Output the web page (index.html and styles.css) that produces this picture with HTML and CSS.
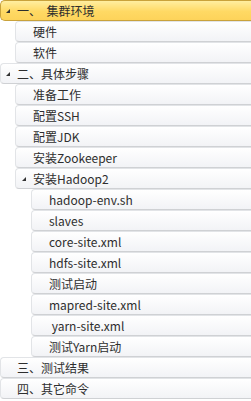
FILE: index.html
```html
<!DOCTYPE html>
<html>
<head>
<meta charset="utf-8">
<link rel="stylesheet" href="styles.css">
</head>
<body>
<ul class="tree">
  <li>
    <div class="row l1 selected"><span class="arrow"></span><span class="label">一、&nbsp; 集群环境</span></div>
    <ul class="sub">
      <li><div class="row l2"><span class="label">硬件</span></div></li>
      <li><div class="row l2"><span class="label">软件</span></div></li>
    </ul>
  </li>
  <li>
    <div class="row l1"><span class="arrow"></span><span class="label">二、具体步骤</span></div>
    <ul class="sub">
      <li><div class="row l2"><span class="label">准备工作</span></div></li>
      <li><div class="row l2"><span class="label">配置SSH</span></div></li>
      <li><div class="row l2"><span class="label">配置JDK</span></div></li>
      <li><div class="row l2"><span class="label">安装Zookeeper</span></div></li>
      <li>
        <div class="row l2"><span class="arrow"></span><span class="label">安装Hadoop2</span></div>
        <ul class="sub">
          <li><div class="row l3"><span class="label">hadoop-env.sh</span></div></li>
          <li><div class="row l3"><span class="label">slaves</span></div></li>
          <li><div class="row l3"><span class="label">core-site.xml</span></div></li>
          <li><div class="row l3"><span class="label">hdfs-site.xml</span></div></li>
          <li><div class="row l3"><span class="label">测试启动</span></div></li>
          <li><div class="row l3"><span class="label">mapred-site.xml</span></div></li>
          <li><div class="row l3"><span class="label">&nbsp;yarn-site.xml</span></div></li>
          <li><div class="row l3"><span class="label">测试Yarn启动</span></div></li>
        </ul>
      </li>
    </ul>
  </li>
  <li><div class="row l1"><span class="label">三、测试结果</span></div></li>
  <li><div class="row l1"><span class="label">四、其它命令</span></div></li>
</ul>
</body>
</html>
```
FILE: styles.css
```css
html, body {
  margin: 0;
  padding: 0;
  background: #ffffff;
}
.tree, .sub {
  list-style: none;
  margin: 0;
  padding: 0;
}
.sub {
  margin-left: 15px;
}
.sub .sub {
  margin-left: 16px;
}
.row {
  position: relative;
  display: flex;
  align-items: center;
  height: 19px;
  border: 1px solid #e2e4e7;
  border-right: none;
  border-bottom-color: #cfd1d4;
  border-radius: 4px 0 0 4px;
  background: linear-gradient(#ffffff, #f2f3f6);
  font-family: "Noto Sans CJK SC", "Open Sans", sans-serif;
  font-size: 12px;
  color: #2e2e2e;
  white-space: nowrap;
}
.row.l1 {
  padding-left: 16px;
}
.row.l2 {
  padding-left: 17px;
}
.row.l3 {
  padding-left: 17px;
}
.row.selected {
  border: 1px solid #c9a23b;
  border-right: none;
  background: linear-gradient(#ffeea0, #ffd964 55%, #fdd35a);
  border-radius: 5px 0 0 5px;
}
.arrow {
  position: absolute;
  left: 5px;
  top: 8px;
  width: 0;
  height: 0;
  border-left: 4px solid transparent;
  border-bottom: 4px solid #333;
}
.l2 .arrow {
  left: 6px;
}
.label {
  line-height: 19px;
}
```
